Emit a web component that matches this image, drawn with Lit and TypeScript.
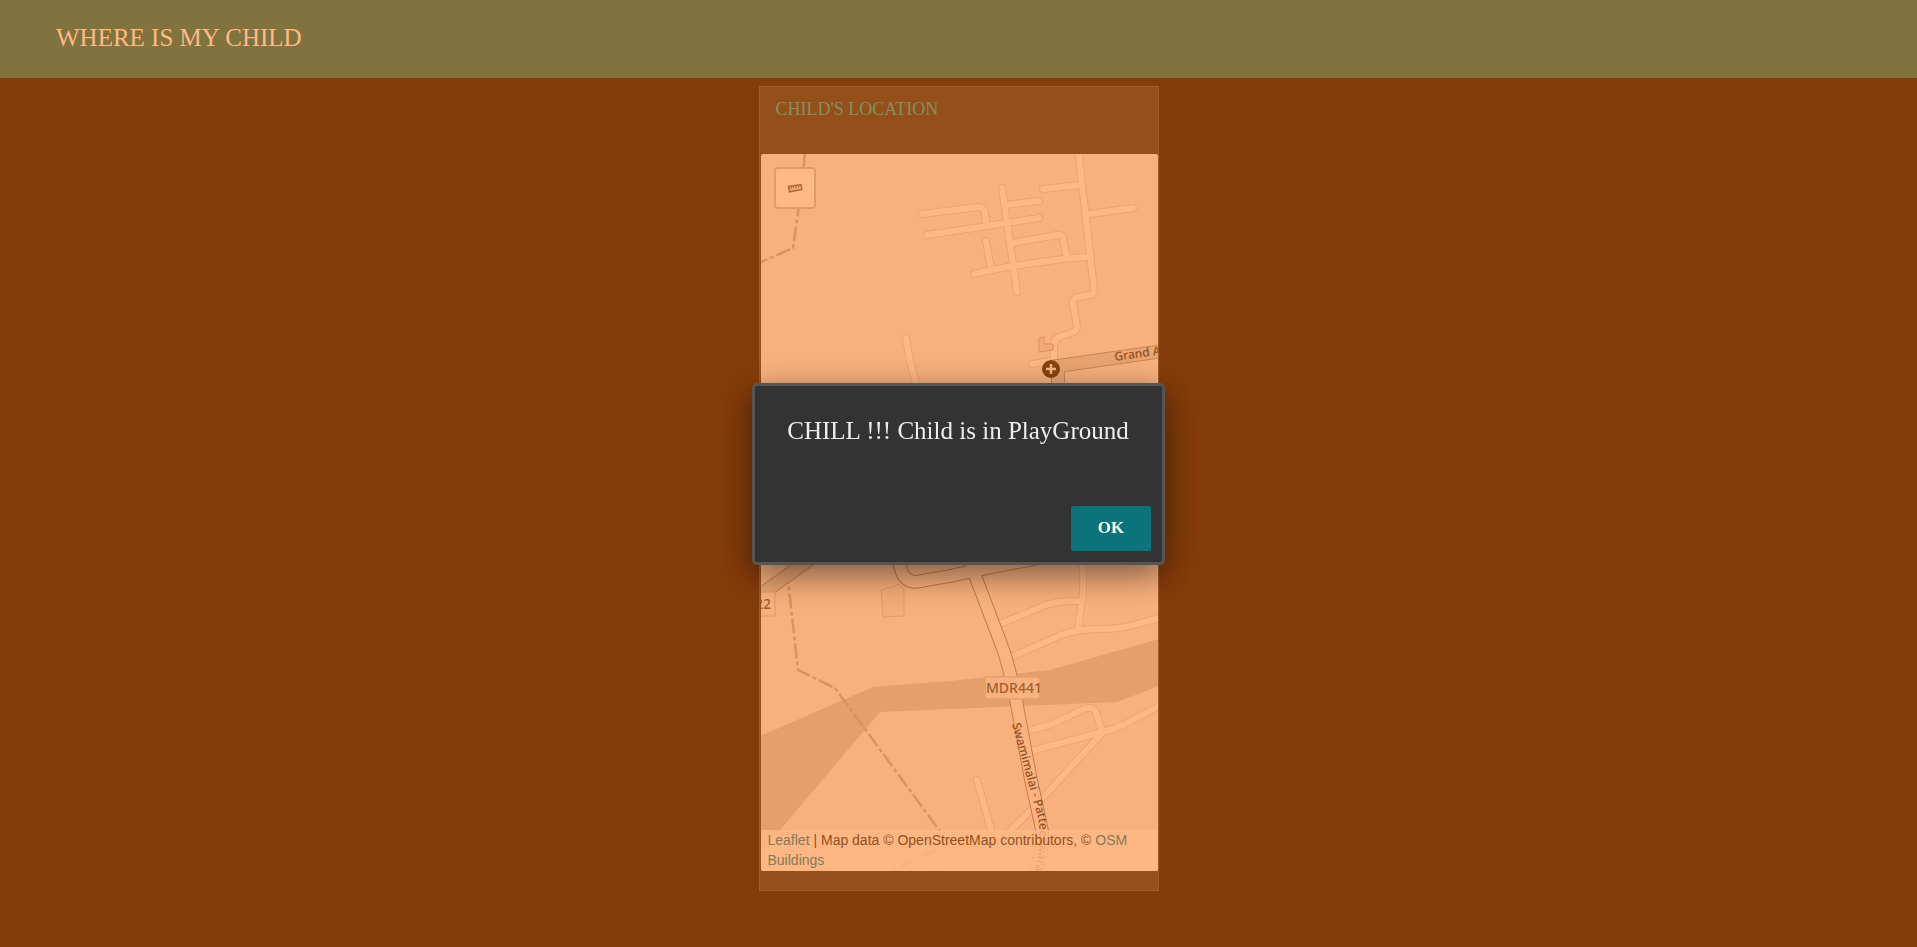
import { LitElement, html, css, svg } from "lit";
import { customElement, state } from "lit/decorators.js";

const streets = [
  "M161 60 L217 53 Q223 53 224 59 L226 72",
  "M166 81 L278 64",
  "M241 34 L256 138",
  "M244 51 L278 47",
  "M225 87 L230 115",
  "M213 120 Q245 112 310 104 L330 103",
  "M251 89 L296 81 Q301 80 302 85 L306 104",
  "M317 -5 L333 135 Q334 140 328 141 L317 143 Q312 144 312 149 L316 172 Q316 177 310 179 L298 183 Q293 185 293 190 L293 210",
  "M282 35 L319 31",
  "M329 60 L372 54",
  "M271 210 L290 207",
  "M145 184 Q148 205 155 230",
  "M322 402 L322 440 L317 474",
  "M236 471 L280 453 Q292 447 319 447",
  "M248 504 L298 482 Q315 474 345 475 Q365 474 380 469 L402 463",
  "M263 578 L291 570 L321 556 Q333 550 336 561 L341 577",
  "M267 598 L341 578 Q355 575 370 567 L402 550",
  "M343 577 L276 650 L250 676",
  "M216 626 L234 690",
  "M150 725 Q190 700 235 690 Q275 685 310 730",
];

const tracks = ["M44 -2 L41 30 L32 94 L-2 109", "M23 390 L37 516 L74 534 L178 676 L187 690 L120 722"];

const mainRoads =
  "M136 400 L140 416 Q144 428 155 428 L189 422 L221 415 L300 400 M204 385 L215 424 L242 495 Q248 512 255 546 L270 626 L281 676 Q284 692 272 725";

@customElement("location-map")
export class LocationMap extends LitElement {
  static styles = css`
    :host {
      display: grid;
      border-radius: 2px;
      overflow: hidden;
      background: #f8b17e;
      font-family: "Liberation Sans", Arial, sans-serif;
    }
    .tiles,
    .controls,
    .attribution {
      grid-area: 1 / 1;
    }
    .tiles {
      display: block;
      width: 100%;
      height: 717px;
    }
    .edge {
      fill: none;
      stroke: #eba472;
      stroke-width: 8;
      stroke-linecap: round;
      stroke-linejoin: round;
    }
    .street {
      fill: none;
      stroke: #ffb784;
      stroke-width: 6;
      stroke-linecap: round;
      stroke-linejoin: round;
    }
    .track {
      fill: none;
      stroke: #db935f;
      stroke-width: 2.6;
      stroke-dasharray: 15 3 4 3;
    }
    .river {
      fill: #e49f6b;
    }
    .road-edge {
      fill: none;
      stroke: #c27d4a;
      stroke-width: 13.6;
    }
    .road {
      fill: none;
      stroke: #fab380;
      stroke-width: 11.6;
    }
    .wide-edge {
      fill: none;
      stroke: #c98652;
      stroke-width: 14;
    }
    .wide {
      fill: none;
      stroke: #e9a573;
      stroke-width: 12;
    }
    .outline {
      fill: #f4ad79;
      stroke: #e29d69;
    }
    .shield {
      fill: #f9b27f;
      stroke: #e6a06e;
      stroke-width: 1.5;
    }
    .label {
      fill: #93501d;
      font-family: "Noto Sans", sans-serif;
      font-size: 12px;
      font-weight: 500;
    }
    .route {
      fill: #a4602d;
      font-size: 14px;
    }
    .controls {
      align-self: start;
      justify-self: start;
      padding: 13px;
    }
    .measure {
      display: grid;
      place-items: center;
      width: 42px;
      height: 42px;
      padding: 0;
      border: 2px solid #e19b67;
      border-radius: 4px;
      background: #ffb986;
    }
    .attribution {
      align-self: end;
      box-sizing: border-box;
      padding: 0 7px 1px;
      background: rgb(255 184 132 / 82%);
      color: #93501d;
      font-size: 14px;
      line-height: 20px;
    }
    .attribution a {
      color: #7d7d57;
      text-decoration: none;
    }
  `;

  render() {
    return html`
      <svg class="tiles" viewBox="0 0 397 717" preserveAspectRatio="xMidYMid slice" role="img" aria-label="Street map">
        <defs>
          <path id="swamimalai" d="M251 570 L277 664 Q282 690 270 730" />
        </defs>
        <path class="river" d="M-1 582 L112 533 L189 527 L289 516 L398 485 L398 532 L356 548 L189 555 L119 558 L19 676 L-1 698 Z" />
        ${tracks.map((d) => svg`<path class="track" d=${d} />`)}
        <path class="outline" d="M120 436 L138 430 L143 435 L143 462 L122 463 Z" />
        <path class="wide-edge" d="M-12 449 L59 398" />
        <path class="wide" d="M-12 449 L59 398" />
        ${streets.map((d) => svg`<path class="edge" d=${d} />`)}
        ${streets.map((d) => svg`<path class="street" d=${d} />`)}
        <path class="road-edge" d=${mainRoads} />
        <path class="road" d=${mainRoads} />
        <path class="wide-edge" d="M290 213 L402 197 M297 215 V250" />
        <path class="wide" d="M290 213 L402 197 M297 215 V250" />
        <path d="M278 184 L283 183 V190 H292 V196 L278 198 Z" fill="#f3aa76" stroke="#dc925d" />
        <circle cx="290" cy="215" r="9" fill="#874411" />
        <path d="M285 215 H295 M290 210 V220" stroke="#f8b17e" stroke-width="2.5" />
        <text class="label" x="354" y="207" transform="rotate(-8 354 207)">Grand Anicut</text>
        <rect class="shield" x="-15" y="438" width="29" height="24" rx="2" />
        <text class="label route" x="-6" y="455">22</text>
        <rect class="shield" x="224" y="523" width="55" height="22" rx="2" />
        <text class="label route" x="225" y="539">MDR441</text>
        <text class="label"><textPath href="#swamimalai">Swamimalai - Patteeswaram</textPath></text>
      </svg>
      <div class="controls">
        <button class="measure" aria-label="Measure distance">
          <svg width="16" height="10" viewBox="0 0 16 10" aria-hidden="true">
            <path d="M1.5 3.5 L14 1.5 L14.8 6.5 L2.5 8.8 Z" fill="#f2ab78" stroke="#ad6934" stroke-width="1.5" />
            <path d="M4 3.5 L4.4 6 M6.5 3 L6.9 5.5 M9 2.7 L9.4 5.2 M11.5 2.3 L11.9 4.8" stroke="#ad6934" />
          </svg>
        </button>
      </div>
      <div class="attribution">
        <a href="#leaflet">Leaflet</a> | Map data © OpenStreetMap contributors, © <a href="#buildings">OSM Buildings</a>
      </div>
    `;
  }
}

@customElement("app-root")
export class AppRoot extends LitElement {
  static styles = css`
    :host {
      display: flex;
      flex-direction: column;
      min-height: 100vh;
      background: #843c0a;
      font-family: "Liberation Serif", "Times New Roman", serif;
    }
    .bar {
      padding: 22px 56px 24px;
      background: #80733e;
    }
    .bar h1 {
      margin: 0;
      color: #ffb986;
      font-size: 25px;
      font-weight: 400;
      line-height: 32px;
    }
    .card {
      box-sizing: border-box;
      width: 100%;
      max-width: 400px;
      margin: 8px auto 0;
      padding: 0 0 19px 1px;
      border: 1px solid #a15c2a;
      background: #954f1b;
    }
    .card h2 {
      margin: 0;
      padding: 12px 15px 34px;
      color: #80935b;
      font-size: 18px;
      font-weight: 400;
      line-height: 21px;
    }
    .overlay {
      position: fixed;
      inset: 0;
      display: grid;
      place-items: center;
      pointer-events: none;
    }
    .dialog {
      box-sizing: border-box;
      display: flex;
      flex-direction: column;
      gap: 57px;
      width: 413px;
      max-width: 100%;
      padding: 26px 11px 11px 10px;
      border: 3px solid #555;
      border-radius: 5px;
      background: #333;
      box-shadow: 0 10px 34px rgb(0 0 0 / 50%);
      pointer-events: auto;
    }
    .dialog p {
      margin: 0;
      color: #eee;
      font-size: 25px;
      line-height: 37px;
      text-align: center;
    }
    .ok {
      align-self: flex-end;
      width: 80px;
      height: 45px;
      border: 0;
      border-radius: 2px;
      background: #0b747a;
      color: #fff;
      font: 700 17px "Liberation Serif", "Times New Roman", serif;
    }
  `;

  @state() private alertOpen = true;

  private dismiss() {
    this.alertOpen = false;
  }

  render() {
    return html`
      <header class="bar"><h1>WHERE IS MY CHILD</h1></header>
      <main>
        <section class="card">
          <h2>CHILD'S LOCATION</h2>
          <location-map></location-map>
        </section>
      </main>
      ${this.alertOpen
        ? html`<div class="overlay">
            <div class="dialog" role="alertdialog" aria-labelledby="message">
              <p id="message">CHILL !!! Child is in PlayGround</p>
              <button class="ok" @click=${this.dismiss}>OK</button>
            </div>
          </div>`
        : null}
    `;
  }
}
